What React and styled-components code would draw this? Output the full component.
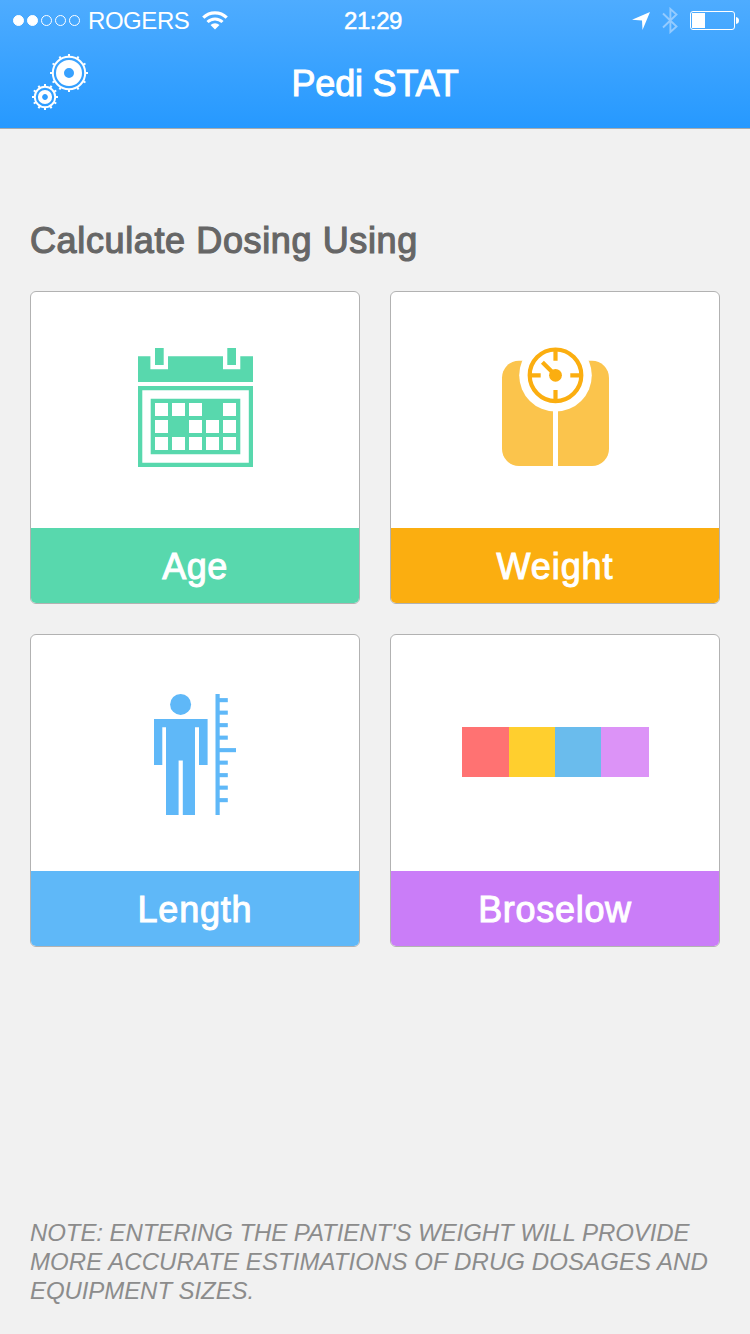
import React from 'react';
import styled, { createGlobalStyle } from 'styled-components';

const GlobalStyle = createGlobalStyle`
  body {
    margin: 0;
    background: #f1f1f1;
    font-family: 'Liberation Sans', Arial, sans-serif;
  }
  svg {
    display: block;
  }
`;

const Screen = styled.div`
  box-sizing: border-box;
  display: flex;
  flex-direction: column;
  width: 750px;
  height: 1334px;
  overflow: hidden;
`;

const Header = styled.header`
  color: #fff;
  background: linear-gradient(#4eacff, #2699ff);
  border-bottom: 1px solid #a7abae;
`;

const StatusBar = styled.div`
  display: grid;
  grid-template-columns: 1fr auto 1fr;
  align-items: center;
  height: 41px;
  padding: 0 11px 0 13px;
  font-size: 24px;
  line-height: 40px;
`;

const StatusGroup = styled.div`
  display: flex;
  align-items: center;
  justify-content: ${p => (p.$end ? 'flex-end' : 'flex-start')};
`;

const Dots = styled.div`
  display: flex;
  gap: 3px;
  margin-right: 8px;
`;

const Dot = styled.span`
  box-sizing: border-box;
  width: 11px;
  height: 11px;
  border: 1px solid #fff;
  border-radius: 50%;
  background: ${p => (p.$on ? '#fff' : 'transparent')};
`;

const Carrier = styled.span`
  width: 114px;
  padding-top: 1px;
  letter-spacing: -0.45px;
`;

const Clock = styled.span`
  margin-right: 6px;
  padding-top: 1px;
  letter-spacing: -0.4px;
  -webkit-text-stroke: 0.5px currentColor;
`;

const NavBar = styled.div`
  display: grid;
  grid-template-columns: 1fr auto 1fr;
  height: 87px;
  padding: 0 30px;
`;

const IconButton = styled.button`
  justify-self: start;
  align-self: start;
  margin: 11px 0 0;
  padding: 0;
  border: 0;
  background: none;
`;

const Title = styled.h1`
  margin: 0;
  font-size: 36px;
  font-weight: 400;
  line-height: 86px;
  letter-spacing: -0.2px;
  -webkit-text-stroke: 1px currentColor;
`;

const Main = styled.main`
  display: flex;
  flex: 1;
  flex-direction: column;
  padding: 91px 30px 29px;
`;

const Heading = styled.h2`
  margin: 0 0 29px;
  color: #666;
  font-size: 36px;
  font-weight: 400;
  line-height: 42px;
  letter-spacing: 0.62px;
  -webkit-text-stroke: 1.2px currentColor;
`;

const Cards = styled.div`
  display: grid;
  grid-template-columns: 330px 330px;
  gap: 30px;
`;

const Card = styled.section`
  box-sizing: border-box;
  display: flex;
  flex-direction: column;
  height: 313px;
  overflow: hidden;
  border: 1px solid #b2b2b2;
  border-radius: 6px;
  background: #fff;
`;

const Picture = styled.div`
  flex: 1;
`;

const Label = styled.div`
  height: 75px;
  color: #fff;
  background: ${p => p.$color};
  font-size: 36px;
  line-height: 78px;
  letter-spacing: ${p => p.$spacing}px;
  text-align: center;
  -webkit-text-stroke: 1px currentColor;
`;

const Note = styled.p`
  margin: auto 0 0;
  color: #8c8c8c;
  font-size: 24px;
  font-style: italic;
  line-height: 29px;
  white-space: nowrap;
`;

const NoteLine = styled.span`
  display: block;
  letter-spacing: ${p => p.$spacing}px;
`;

const Wifi = () => (
  <svg width="26" height="19" viewBox="0 0 26 19" fill="none" stroke="#fff">
    <path d="M1.3 6.7a16.6 16.6 0 0 1 23.4 0" strokeWidth="3.2" />
    <path d="M5.5 11a10.6 10.6 0 0 1 15 0" strokeWidth="3" />
    <path d="M13 18.5 8.5 14a6.4 6.4 0 0 1 9 0z" fill="#fff" stroke="none" />
  </svg>
);

const Location = () => (
  <svg width="18" height="18" viewBox="0 0 18 18" fill="#fff">
    <path d="M18 0 10.5 18 10 8.4 0 7.8z" />
  </svg>
);

const Bluetooth = () => (
  <svg width="16" height="27" viewBox="0 .5 16 27" fill="none" stroke="#94cbff" strokeWidth="1.9">
    <path d="M1 7l13.5 13L8.4 25.5V2.5L14.5 8 1 21" />
  </svg>
);

const Battery = () => (
  <svg width="49" height="19" viewBox="0 0 49 19">
    <rect x=".5" y=".5" width="44" height="18" rx="2.5" fill="none" stroke="#fff" />
    <rect x="2" y="2" width="13" height="15" fill="#fff" />
    <path d="M46 6q3 .5 3 3.5T46 13z" fill="#fff" />
  </svg>
);

const teeth = Array.from({ length: 12 }, (_, i) => i * 30);

const Gear = ({ x, y, rim, rimWidth, disc, discWidth, tip }) => (
  <g transform={`translate(${x} ${y})`} fill="none" stroke="#fff">
    <circle r={rim} strokeWidth={rimWidth} />
    <circle r={disc} strokeWidth={discWidth} />
    {teeth.map(angle => (
      <path key={angle} d={`M0 ${-rim}V${-tip}`} strokeWidth="2" transform={`rotate(${angle})`} />
    ))}
  </g>
);

const Gears = () => (
  <svg width="60" height="60" viewBox="30 52 60 60">
    <Gear x={69} y={73} rim={16.2} rimWidth={2} disc={9} discWidth={8} tip={19} />
    <Gear x={45} y={97} rim={10.2} rimWidth={1.9} disc={5} discWidth={4.2} tip={13} />
  </svg>
);

const cells = [
  [1, 1, 1, 0, 1],
  [1, 0, 1, 1, 1],
  [1, 1, 1, 1, 1],
];

const Calendar = () => (
  <svg width="328" height="236" viewBox="31 292 328 236" fill="#58d8ad">
    <path d="M138 356.3h12.4v13H168v-13h55v13h17.3v-13H253V382H138z" />
    <path d="M155 348h8.7v17H155zM227.3 348h8.7v17h-8.7z" />
    <path fillRule="evenodd" d="M138 386h115v81H138zM142.3 390.2V462.7H248.8V390.2z" />
    <path d="M150.7 398.7h89.6v55.6h-89.6z" />
    {cells.map((row, r) =>
      row.map((on, c) => on === 1 && <rect key={`${r}-${c}`} x={155 + c * 17} y={403 + r * 17} width="13" height="13" fill="#fff" />)
    )}
  </svg>
);

const Scale = () => (
  <svg width="328" height="236" viewBox="391 292 328 236">
    <rect x="502" y="360.7" width="107" height="105.3" rx="17" fill="#fbc44c" />
    <path d="M553 400h5v68h-5z" fill="#fff" />
    <circle cx="555.5" cy="375.3" r="36.3" fill="#fff" />
    <g fill="none" stroke="#fbae10" strokeWidth="4.2">
      <circle cx="555.5" cy="375.3" r="25.8" />
      <path d="M555.5 350v10.7M555.5 390v10.7M530 375.3h10.7M570.3 375.3H581M542.4 362.2l13 13" />
    </g>
    <circle cx="555.5" cy="375.3" r="6.4" fill="#fbae10" />
  </svg>
);

const marks = Array.from({ length: 9 }, (_, i) => i);

const Person = () => (
  <svg width="328" height="236" viewBox="31 635 328 236" fill="#5fb8f8">
    <circle cx="180.6" cy="704.4" r="10.5" />
    <path d="M154 719h53.6v46H199v-37.8h-4V815h-12.2v-54.6h-4.2V815H166v-87.8h-3.7V765H154z" />
    <path d="M215.5 694h4.2v121h-4.2z" />
    {marks.map(i => (
      <rect key={i} x="219" y={698.1 + i * 12.5} width={i === 4 ? 17 : 8.8} height="4.1" />
    ))}
  </svg>
);

const Tape = () => (
  <svg width="328" height="236" viewBox="391 635 328 236">
    <path d="M462 727h47v50h-47z" fill="#ff7272" />
    <path d="M509 727h46v50h-46z" fill="#ffcf2e" />
    <path d="M555 727h46v50h-46z" fill="#6abced" />
    <path d="M601 727h48v50h-48z" fill="#dc93f7" />
  </svg>
);

const methods = [
  { name: 'Age', color: '#58d8ad', spacing: 0.5, Icon: Calendar },
  { name: 'Weight', color: '#fbae10', spacing: 0.9, Icon: Scale },
  { name: 'Length', color: '#5fb8f8', spacing: 0.8, Icon: Person },
  { name: 'Broselow', color: '#ca7df8', spacing: 0.7, Icon: Tape },
];

const StatusIcons = styled(StatusGroup)`
  gap: 12px;
`;

export default () => (
  <Screen>
    <GlobalStyle />
    <Header>
      <StatusBar>
        <StatusGroup>
          <Dots>
            {[1, 1, 0, 0, 0].map((on, i) => (
              <Dot key={i} $on={on} />
            ))}
          </Dots>
          <Carrier>ROGERS</Carrier>
          <Wifi />
        </StatusGroup>
        <Clock>21:29</Clock>
        <StatusIcons $end>
          <Location />
          <Bluetooth />
          <Battery />
        </StatusIcons>
      </StatusBar>
      <NavBar>
        <IconButton aria-label="Settings">
          <Gears />
        </IconButton>
        <Title>Pedi STAT</Title>
      </NavBar>
    </Header>
    <Main>
      <Heading>Calculate Dosing Using</Heading>
      <Cards>
        {methods.map(({ name, color, spacing, Icon }) => (
          <Card key={name}>
            <Picture>
              <Icon />
            </Picture>
            <Label $color={color} $spacing={spacing}>
              {name}
            </Label>
          </Card>
        ))}
      </Cards>
      <Note>
        <NoteLine $spacing={-0.08}>NOTE: ENTERING THE PATIENT&#39;S WEIGHT WILL PROVIDE</NoteLine>
        <NoteLine $spacing={0.08}>MORE ACCURATE ESTIMATIONS OF DRUG DOSAGES AND</NoteLine>
        <NoteLine $spacing={-0.08}>EQUIPMENT SIZES.</NoteLine>
      </Note>
    </Main>
  </Screen>
);
